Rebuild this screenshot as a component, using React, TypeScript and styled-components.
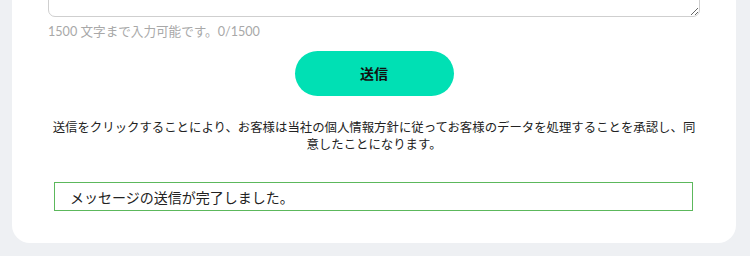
import React from "react";
import styled, { createGlobalStyle } from "styled-components";

const GlobalStyle = createGlobalStyle`
  body {
    margin: 0;
    background: #eef0f3;
    font-family: "Noto Sans CJK JP", "Noto Sans", sans-serif;
  }
`;

const Page = styled.div`
  height: 256px;
  overflow: hidden;
  display: flex;
  flex-direction: column;
  justify-content: flex-end;
  padding: 0 14px 13px 12px;
  box-sizing: border-box;
`;

const Card = styled.div`
  background: #fff;
  border-radius: 18px;
  padding: 20px 36px 32px 36px;
  display: flex;
  flex-direction: column;
`;

const TextArea = styled.textarea`
  display: block;
  width: 100%;
  box-sizing: border-box;
  height: 120px;
  border: 1px solid #cfcfcf;
  border-radius: 7px;
  resize: vertical;
  font-family: inherit;
`;

const Counter = styled.div`
  margin-top: 6px;
  font-family: "Lato", "Noto Sans CJK JP", sans-serif;
  font-size: 12.6px;
  line-height: 18px;
  color: #a8a8a8;
`;

const SubmitButton = styled.button`
  align-self: center;
  margin-top: 10px;
  width: 159px;
  height: 45px;
  border: none;
  border-radius: 23px;
  background: #00e0b4;
  color: #111;
  font-family: "Noto Sans CJK JP", sans-serif;
  font-weight: 700;
  font-size: 14px;
  line-height: 1;
  padding: 0 0 2px;
  cursor: pointer;
`;

const Disclaimer = styled.p`
  margin: 23px auto 0;
  width: 648px;
  text-align: center;
  font-size: 12.4px;
  line-height: 17px;
  color: #222;
`;

const SuccessBox = styled.div`
  margin: 29px 7px 0 6px;
  height: 29px;
  box-sizing: border-box;
  border: 1.5px solid #5cb85c;
  padding: 0 15px;
  display: flex;
  align-items: center;
  font-size: 14px;
  color: #222;
`;

export default function App() {
  return (
    <>
      <GlobalStyle />
      <Page>
        <Card>
          <TextArea />
          <Counter>1500 文字まで入力可能です。0/1500</Counter>
          <SubmitButton>送信</SubmitButton>
          <Disclaimer>
            送信をクリックすることにより、お客様は当社の個人情報方針に従ってお客様のデータを処理することを承認し、同意したことになります。
          </Disclaimer>
          <SuccessBox>メッセージの送信が完了しました。</SuccessBox>
        </Card>
      </Page>
    </>
  );
}
